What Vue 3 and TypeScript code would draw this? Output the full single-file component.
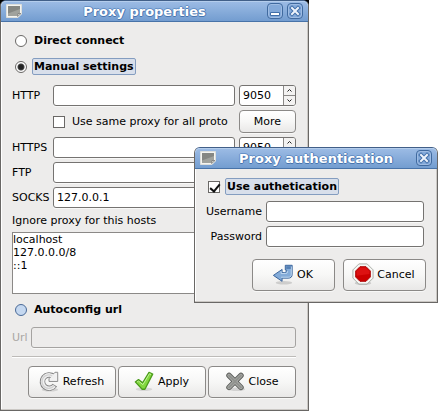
<script setup lang="ts">
import { reactive, ref } from 'vue'

interface ProxyRow {
  id: string
  label: string
  host: string
  port: number
}

type Mode = 'direct' | 'manual' | 'auto'

const mode = ref<Mode>('manual')
const sameProxy = ref(false)
const rows = reactive<ProxyRow[]>([
  { id: 'http', label: 'HTTP', host: '', port: 9050 },
  { id: 'https', label: 'HTTPS', host: '', port: 9050 },
  { id: 'ftp', label: 'FTP', host: '', port: 9050 },
  { id: 'socks', label: 'SOCKS', host: '127.0.0.1', port: 9050 },
])
const ignoreHosts = ref('localhost\n127.0.0.0/8\n::1')
const autoUrl = ref('')
const useAuth = ref(true)
const username = ref('')
const password = ref('')

function step(row: ProxyRow, by: number) {
  row.port = Math.min(65535, Math.max(0, row.port + by))
}
</script>

<template>
  <main class="desktop">
    <section class="window main-window" aria-labelledby="main-title">
      <header class="titlebar">
        <svg class="window-icon" viewBox="0 0 16 14" aria-hidden="true">
          <path d="M.5.5h15v9.500l-3.500 3.500H.5z" fill="#f4f4f0" stroke="#dcdedb" />
          <path d="M2 2h12v7l-3 3H2z" fill="#858783" />
          <path d="M2 9.500 14 5v4l-3 3H2z" fill="#a0a29d" />
          <path d="m11.500 12.500.5-3 3 0z" fill="#deded5" stroke="#666" stroke-width=".6" />
        </svg>
        <h1 id="main-title">Proxy properties</h1>
        <button class="frame-button" type="button" aria-label="Minimize">
          <svg viewBox="0 0 14 14"><path d="M2.500 8.500h9v3h-9z" fill="#fff" stroke="#416fa9" /></svg>
        </button>
        <button class="frame-button" type="button" aria-label="Close window">
          <svg viewBox="0 0 14 14">
            <path d="m4 4 6 6m0-6-6 6" stroke="#416fa9" stroke-width="4" stroke-linecap="square" />
            <path d="m4 4 6 6m0-6-6 6" stroke="#edf3fb" stroke-width="2" stroke-linecap="square" />
          </svg>
        </button>
      </header>

      <form class="main-body" @submit.prevent>
        <label class="choice">
          <input v-model="mode" class="radio" type="radio" name="mode" value="direct" />
          <span class="choice-text">Direct connect</span>
        </label>
        <label class="choice second">
          <input v-model="mode" class="radio" type="radio" name="mode" value="manual" />
          <span class="choice-text focused">Manual settings</span>
        </label>

        <div class="proxies">
          <template v-for="(row, index) in rows" :key="row.id">
            <label :for="row.id">{{ row.label }}</label>
            <input :id="row.id" v-model="row.host" class="field" type="text" />
            <div class="spin">
              <input v-model.number="row.port" type="text" inputmode="numeric" :aria-label="row.label + ' port'" />
              <div class="arrows">
                <button type="button" aria-label="Increase port" @click="step(row, 1)">
                  <svg viewBox="0 0 7 5"><path d="m1.500 3.500 2-2 2 2" /></svg>
                </button>
                <button type="button" aria-label="Decrease port" @click="step(row, -1)">
                  <svg viewBox="0 0 7 5"><path d="m1.500 1.500 2 2 2-2" /></svg>
                </button>
              </div>
            </div>
            <template v-if="index === 0">
              <label class="same">
                <input v-model="sameProxy" class="check" type="checkbox" />
                <span>Use same proxy for all proto</span>
              </label>
              <button class="button more" type="button">More</button>
            </template>
          </template>
        </div>

        <label class="ignore-label" for="ignore">Ignore proxy for this hosts</label>
        <textarea id="ignore" v-model="ignoreHosts" class="hosts" spellcheck="false"></textarea>

        <label class="choice auto">
          <input v-model="mode" class="radio hovered" type="radio" name="mode" value="auto" />
          <span class="choice-text">Autoconfig url</span>
        </label>
        <div class="url-row">
          <label for="url">Url</label>
          <input id="url" v-model="autoUrl" class="field" type="text" :disabled="mode !== 'auto'" />
        </div>

        <hr />

        <div class="actions">
          <button class="button" type="button">
            <svg class="icon" viewBox="0 0 24 24" aria-hidden="true">
              <ellipse cx="13" cy="21.500" rx="9" ry="2" fill="#000" opacity=".12" />
              <path d="M17 7.200A7.300 7.300 0 1 0 18.300 16.500" stroke="#858585" stroke-width="6" />
              <path d="M21.500 2.500v10h-9.500V9.500L18.500 2.500z" fill="#f2f2f2" stroke="#858585" stroke-linejoin="round" />
              <path d="M18 8.200A7.300 7.300 0 1 0 17.900 17.300" stroke="#f0f0f0" stroke-width="4" />
              <path d="M15.500 6.500A7.300 7.300 0 1 0 17.500 17" stroke="#d2d2d2" stroke-width="1.500" />
            </svg>
            <span>Refresh</span>
          </button>
          <button class="button" type="submit">
            <svg class="icon" viewBox="0 0 24 24" aria-hidden="true">
              <ellipse cx="12" cy="21" rx="9" ry="2" fill="#000" opacity=".1" />
              <path d="m2.500 13 3.500-2.500 4.500 3.500L17.500 2.500l4 2L13 21h-3z" fill="#83d83e" stroke="#4b9b1c" stroke-width="1.400" stroke-linejoin="round" />
              <path d="m4.500 13 1.500-1 4.800 4L18 4l1.700 1" fill="none" stroke="#c8f6a1" />
            </svg>
            <span>Apply</span>
          </button>
          <button class="button" type="button">
            <svg class="icon" viewBox="0 0 24 24" aria-hidden="true">
              <ellipse cx="14" cy="21" rx="9" ry="2" fill="#000" opacity=".12" />
              <path d="m5.500 6 13 13m0-13-13 13" stroke="#5b5d5a" stroke-width="6" stroke-linecap="round" />
              <path d="m5.500 6 13 13m0-13-13 13" stroke="#a9aaa7" stroke-width="4" stroke-linecap="round" />
              <path d="m5.500 6 13 13m0-13-13 13" stroke="#90928e" stroke-width="2" stroke-linecap="round" />
            </svg>
            <span>Close</span>
          </button>
        </div>
      </form>
    </section>

    <section class="window dialog" role="dialog" aria-labelledby="auth-title">
      <header class="titlebar">
        <svg class="window-icon" viewBox="0 0 16 14" aria-hidden="true">
          <path d="M.5.5h15v9.500l-3.500 3.500H.5z" fill="#f4f4f0" stroke="#dcdedb" />
          <path d="M2 2h12v7l-3 3H2z" fill="#858783" />
          <path d="M2 9.500 14 5v4l-3 3H2z" fill="#a0a29d" />
          <path d="m11.500 12.500.5-3 3 0z" fill="#deded5" stroke="#666" stroke-width=".6" />
        </svg>
        <h2 id="auth-title">Proxy authentication</h2>
        <button class="frame-button" type="button" aria-label="Close dialog">
          <svg viewBox="0 0 14 14">
            <path d="m4 4 6 6m0-6-6 6" stroke="#416fa9" stroke-width="4" stroke-linecap="square" />
            <path d="m4 4 6 6m0-6-6 6" stroke="#edf3fb" stroke-width="2" stroke-linecap="square" />
          </svg>
        </button>
      </header>

      <form class="dialog-body" @submit.prevent>
        <label class="choice">
          <input v-model="useAuth" class="check" type="checkbox" />
          <span class="choice-text focused">Use authetication</span>
        </label>
        <div class="credentials">
          <label for="username">Username</label>
          <input id="username" v-model="username" class="field" type="text" />
          <label for="password">Password</label>
          <input id="password" v-model="password" class="field" type="password" />
        </div>
        <div class="dialog-actions">
          <button class="button" type="submit">
            <svg class="icon" viewBox="0 0 24 24" aria-hidden="true">
              <ellipse cx="13" cy="21.500" rx="9" ry="2" fill="#000" opacity=".14" />
              <path d="M14.500 2.500h7.500v10c0 2.500-1.500 4-4 4H11v3.500l-9.500-6.500L11 7v3.500h3c.8 0 1.500-.5 1.500-1.500V7.500h-1z" fill="#83abd8" stroke="#315d96" stroke-linejoin="round" />
              <path d="M10 9v2.500h5c1.500 0 2-1 2-2.500M21 4v8.500c0 2-1 3-3 3h-8" fill="none" stroke="#c6dcf2" />
              <path d="M15.500 3.500h5v3h-5z" fill="#547fb3" />
            </svg>
            <span>OK</span>
          </button>
          <button class="button" type="button">
            <svg class="icon" viewBox="0 0 24 24" aria-hidden="true">
              <ellipse cx="12" cy="22" rx="9" ry="2" fill="#000" opacity=".15" />
              <path d="M7.500 1h9L23 7.500v9L16.500 23h-9L1 16.500v-9z" fill="#f7f7f5" stroke="#a4a8a2" />
              <path d="M8.700 4h6.600L20 8.700v6.600L15.300 20H8.700L4 15.300V8.700z" fill="#cc0000" stroke="#a90000" />
              <path d="M9 5h6l4 4v3L5 14V9z" fill="#e22" opacity=".5" />
            </svg>
            <span>Cancel</span>
          </button>
        </div>
      </form>
    </section>
  </main>
</template>

<style>
body {
  margin: 0;
  background: #fff;
}
</style>

<style scoped>
.desktop {
  position: relative;
  background: linear-gradient(#000 0 0) 0 0 / 309px 6px no-repeat;
  color: #000;
  font: 11px/13px "DejaVu Sans", sans-serif;
}

.desktop * {
  box-sizing: border-box;
}

button,
input,
textarea {
  margin: 0;
  color: inherit;
  font: inherit;
}

.window {
  width: 100%;
  background: #edeceb;
  border: 1px solid #696765;
  border-top-color: #415f88;
  border-radius: 6px 6px 0 0;
  box-shadow: inset -1px -1px #cbc8c4, inset 1px 0 #fff;
}

.main-window {
  max-width: 309px;
}

.dialog {
  position: absolute;
  top: 147px;
  left: 194px;
  max-width: 244px;
}

.titlebar {
  display: flex;
  align-items: center;
  gap: 4px;
  height: 21px;
  padding: 0 5px;
  background: linear-gradient(#9dbce5, #739dd0);
  border-bottom: 1px solid #4873a8;
  border-radius: 5px 5px 0 0;
  box-shadow: inset 0 1px #b4cdec;
}

.titlebar h1,
.titlebar h2 {
  flex: 1;
  margin: 0;
  padding-top: 2px;
  color: #fff;
  font-size: 13px;
  font-weight: bold;
  line-height: 18px;
  text-align: center;
  text-shadow: 1px 0 #4774ad, -1px 0 #6691c7, 0 1px #4774ad, 0 -1px #6691c7;
  white-space: nowrap;
}

.window-icon {
  width: 16px;
  height: 14px;
}

.frame-button {
  width: 16px;
  height: 16px;
  padding: 0;
  background: #83a9d9;
  border: 1px solid #406a9f;
  border-radius: 4px;
  box-shadow: inset 0 0 0 1px #9ebce3;
}

.frame-button svg {
  display: block;
  width: 14px;
  height: 14px;
  fill: none;
}

.main-body {
  display: flex;
  flex-direction: column;
  padding: 10px 12px 12px 11px;
}

.choice {
  display: flex;
  align-items: center;
  gap: 5px;
  height: 17px;
  padding-left: 3px;
  font-weight: bold;
}

.choice.second {
  margin-top: 9px;
}

.choice-text {
  padding: 1px;
  border: 1px solid transparent;
  border-radius: 2px;
  line-height: 13px;
  white-space: nowrap;
}

.focused {
  background: #d8dfeb;
  border-color: #849dc0;
}

.radio,
.check {
  flex: none;
  width: 12px;
  height: 12px;
  appearance: none;
  background: #fff;
  border: 1px solid #6a6866;
}

.radio {
  border-radius: 50%;
}

.radio:checked {
  background: radial-gradient(circle, #222 0 2px, #444 3px, #fff 4px);
}

.radio.hovered {
  background: #c5d8f0;
  border-color: #4a6a97;
}

.check:checked {
  position: relative;
}

.check:checked::after {
  position: absolute;
  top: 0;
  left: 3px;
  width: 4px;
  height: 8px;
  border: solid #111;
  border-width: 0 2px 2px 0;
  content: "";
  transform: rotate(40deg);
}

.proxies {
  display: grid;
  grid-template-columns: 37px 1fr 57px;
  gap: 4px;
  align-items: center;
  margin-top: 10px;
}

.field,
.spin {
  width: 100%;
  min-width: 0;
  height: 21px;
  background: #fff;
  border: 1px solid #757371;
  border-radius: 3px;
  box-shadow: 0 1px #f8f8f7;
}

.field {
  padding: 0 3px;
}

.field:disabled {
  background: #edeceb;
  border-color: #a5a3a1;
}

.spin {
  display: flex;
  overflow: hidden;
}

.spin input {
  flex: 1;
  min-width: 0;
  padding: 0 3px;
  background: transparent;
  border: 0;
}

.arrows {
  display: flex;
  flex-direction: column;
  width: 12px;
  background: #f3f2f1;
  border-left: 1px solid #8b8987;
}

.arrows button {
  display: flex;
  flex: 1;
  align-items: center;
  justify-content: center;
  min-height: 0;
  padding: 0;
  background: none;
  border: 0;
}

.arrows button + button {
  border-top: 1px solid #8b8987;
}

.arrows svg {
  width: 7px;
  height: 5px;
  fill: none;
  stroke: #222;
}

.same {
  display: flex;
  grid-column: 2;
  gap: 7px;
  align-items: center;
  min-width: 0;
  white-space: nowrap;
}

.button {
  display: flex;
  align-items: center;
  justify-content: center;
  gap: 3px;
  height: 32px;
  padding: 0 6px 2px 4px;
  background: linear-gradient(#fff, #f7f7f6 50%, #e9e8e7);
  border: 1px solid #8b8987;
  border-radius: 4px;
  box-shadow: 0 1px #f8f8f7;
}

.button.more {
  height: 23px;
  padding: 0 4px;
}

.icon {
  flex: none;
  width: 22px;
  height: 22px;
  fill: none;
}

.ignore-label {
  margin-top: 6px;
}

.hosts {
  width: 100%;
  height: 62px;
  margin-top: 5px;
  padding: 0;
  background: #fff;
  border: 1px solid #8b8987;
  resize: none;
}

.choice.auto {
  margin-top: 7px;
}

.url-row {
  display: grid;
  grid-template-columns: 15px 1fr;
  gap: 4px;
  align-items: center;
  margin-top: 9px;
  color: #aaa7a4;
}

hr {
  width: 100%;
  height: 2px;
  margin: 8px 0 0;
  border: 0;
  border-top: 1px solid #bdbbb8;
  border-bottom: 1px solid #fff;
}

.actions {
  display: grid;
  grid-template-columns: repeat(3, 1fr);
  gap: 2px;
  margin-top: 8px;
  padding-left: 16px;
}

.dialog-body {
  display: flex;
  flex-direction: column;
  padding: 9px 11px 11px 10px;
}

.credentials {
  display: grid;
  grid-template-columns: 57px 1fr;
  gap: 4px;
  align-items: center;
  margin-top: 6px;
  padding-right: 2px;
  text-align: right;
}

.dialog-actions {
  display: grid;
  grid-template-columns: 83px 83px;
  gap: 8px;
  justify-content: end;
  margin-top: 12px;
}
</style>
